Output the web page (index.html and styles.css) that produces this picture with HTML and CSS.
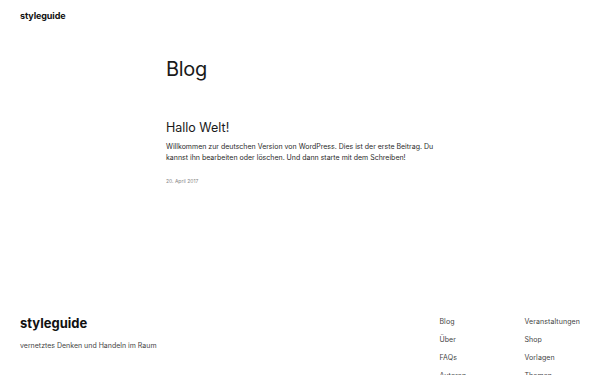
FILE: index.html
```html
<!DOCTYPE html>
<html lang="de">
<head>
<meta charset="utf-8">
<title>Blog – styleguide</title>
<link rel="stylesheet" href="styles.css">
</head>
<body>
<header class="site-header">
  <a class="brand" href="#">styleguide</a>
</header>
<main class="content">
  <h1 class="page-title">Blog</h1>
  <article class="post">
    <h2 class="post-title">Hallo Welt!</h2>
    <p class="post-excerpt">Willkommen zur deutschen Version von WordPress. Dies ist der erste Beitrag. Du kannst ihn bearbeiten oder löschen. Und dann starte mit dem Schreiben!</p>
    <div class="post-date">20. April 2017</div>
  </article>
</main>
<footer class="site-footer">
  <div class="footer-brand">
    <div class="footer-title">styleguide</div>
    <div class="footer-tagline">vernetztes Denken und Handeln im Raum</div>
  </div>
  <nav class="footer-nav">
    <a href="#">Blog</a>
    <a href="#">Veranstaltungen</a>
    <a href="#">Über</a>
    <a href="#">Shop</a>
    <a href="#">FAQs</a>
    <a href="#">Vorlagen</a>
    <a href="#">Autoren</a>
    <a href="#">Themen</a>
  </nav>
</footer>
</body>
</html>
```
FILE: styles.css
```css
* { box-sizing: border-box; }
html, body { margin: 0; padding: 0; }
body {
  font-family: Inter, "Noto Sans", "Liberation Sans", sans-serif;
  color: #1e1e1e;
  background: #fff;
  width: 600px;
  height: 375px;
  overflow: hidden;
}
a { color: inherit; text-decoration: none; }
.site-header {
  padding: 3px 20px 0;
  height: 20px;
}
.brand {
  font-size: 9px;
  font-weight: 700;
  letter-spacing: -0.1px;
  line-height: 11px;
  color: #111;
}
.content {
  width: 268px;
  margin: 0 auto;
  padding-top: 37px;
  height: 295px;
}
.page-title {
  margin: 0;
  font-size: 20px;
  font-weight: 400;
  line-height: 24px;
  letter-spacing: -0.3px;
  color: #1a1a1a;
}
.post { margin-top: 39px; }
.post-title {
  margin: 0;
  font-size: 12.5px;
  font-weight: 400;
  line-height: 16px;
  letter-spacing: 0;
  color: #1a1a1a;
}
.post-excerpt {
  margin: 5px 0 0;
  font-size: 7px;
  line-height: 11px;
  letter-spacing: 0;
  color: #2a2a2a;
}
.post-date {
  margin-top: 15px;
  font-size: 5px;
  line-height: 7px;
  color: #888;
}
.site-footer {
  display: flex;
  justify-content: space-between;
  padding: 0 20px;
}
.footer-title {
  font-size: 13px;
  font-weight: 700;
  line-height: 16px;
  letter-spacing: 0;
  color: #111;
}
.footer-tagline {
  margin-top: 10px;
  font-size: 7px;
  line-height: 9px;
  letter-spacing: 0;
  color: #444;
}
.footer-nav {
  display: grid;
  grid-template-columns: 85px auto;
  row-gap: 9px;
  padding-top: 2px;
  font-size: 7px;
  line-height: 9px;
  letter-spacing: 0.1px;
  color: #444;
}
```
